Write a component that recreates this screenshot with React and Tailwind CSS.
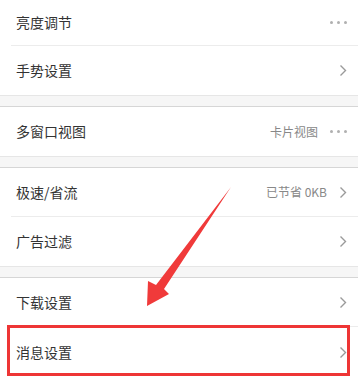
import React from "react";

const font = { fontFamily: '"Noto Sans CJK SC", "Noto Sans", sans-serif' };

function Chevron() {
  return (
    <svg width="8" height="13" viewBox="0 0 8 13" className="shrink-0">
      <polyline points="1.5,1.5 6.5,6.5 1.5,11.5" fill="none" stroke="#9a9a9a" strokeWidth="1.4" />
    </svg>
  );
}

function Dots() {
  return (
    <div className="flex items-center gap-[4px] shrink-0">
      <span className="w-[3px] h-[3px] rounded-full bg-[#b0b0b0]" />
      <span className="w-[3px] h-[3px] rounded-full bg-[#b0b0b0]" />
      <span className="w-[3px] h-[3px] rounded-full bg-[#b0b0b0]" />
    </div>
  );
}

function Row({ label, value, icon, h }) {
  return (
    <div className={`flex items-center justify-between pl-[16px] pr-[11px] bg-white ${h}`}>
      <span className="text-[14px] text-[#333]">{label}</span>
      <div className="flex items-center">
        {value && <span className="text-[12px] text-[#888] mr-[12px]">{value}</span>}
        {icon === "dots" ? <Dots /> : <Chevron />}
      </div>
    </div>
  );
}

const Divider = () => <div className="h-px ml-[11px] bg-[#ececec]" />;
const Gap = () => (
  <div className="border-t border-t-[#e6e6e6] border-b border-b-[#d6d6d6] bg-[#f6f6f6] h-[12px]" />
);

export default function App() {
  return (
    <div className="relative w-[358px] h-[379px] overflow-hidden bg-white" style={font}>
      <Row label="亮度调节" icon="dots" h="h-[45px]" />
      <Divider />
      <Row label="手势设置" icon="chevron" h="h-[49px]" />
      <Gap />
      <Row label="多窗口视图" value="卡片视图" icon="dots" h="h-[49px]" />
      <Gap />
      <Row label="极速/省流" value="已节省 0KB" icon="chevron" h="h-[48px]" />
      <Divider />
      <Row label="广告过滤" icon="chevron" h="h-[49px]" />
      <Gap />
      <Row label="下载设置" icon="chevron" h="h-[48px]" />
      <Divider />
      <Row label="消息设置" icon="chevron" h="h-[50px]" />

      {/* highlight box */}
      <div className="absolute left-[7px] top-[325px] w-[343px] h-[51px] border-[3px] border-[#ee3535]" />

      {/* arrow */}
      <svg className="absolute left-0 top-0" width="358" height="379" viewBox="0 0 358 379">
        <polygon
          points="231,187 164,289 169,294 147,306 148,281 156,285"
          fill="#f03a3a"
        />
      </svg>
    </div>
  );
}
